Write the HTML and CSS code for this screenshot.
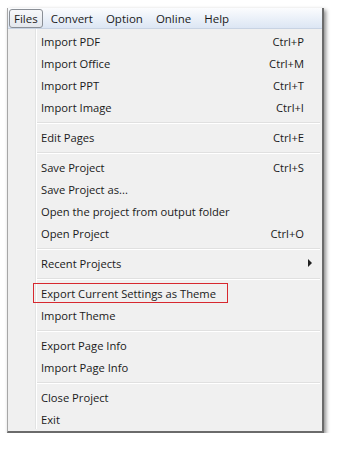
FILE: index.html
```html
<!DOCTYPE html>
<html lang="en">
<head>
    <meta charset="UTF-8">
    <title>Files Menu</title>
    <link rel="stylesheet" href="styles.css">
</head>
<body>
    <div class="window">
        <!-- Top menu bar -->
        <div class="menu-bar">
            <span class="bar-item active">Files</span>
            <span class="bar-item">Convert</span>
            <span class="bar-item">Option</span>
            <span class="bar-item">Online</span>
            <span class="bar-item">Help</span>
        </div>

        <!-- Drop-down list -->
        <div class="menu">
            <div class="item"><span>Import PDF</span><span class="key">Ctrl+P</span></div>
            <div class="item"><span>Import Office</span><span class="key">Ctrl+M</span></div>
            <div class="item"><span>Import PPT</span><span class="key">Ctrl+T</span></div>
            <div class="item"><span>Import Image</span><span class="key">Ctrl+I</span></div>
            <div class="sep"></div>
            <div class="item"><span>Edit Pages</span><span class="key">Ctrl+E</span></div>
            <div class="sep"></div>
            <div class="item"><span>Save Project</span><span class="key">Ctrl+S</span></div>
            <div class="item"><span>Save Project as...</span></div>
            <div class="item"><span>Open the project from output folder</span></div>
            <div class="item"><span>Open Project</span><span class="key">Ctrl+O</span></div>
            <div class="sep"></div>
            <div class="item"><span>Recent Projects</span><span class="arrow"></span></div>
            <div class="sep"></div>
            <div class="item marked"><span>Export Current Settings as Theme</span></div>
            <div class="item"><span>Import Theme</span></div>
            <div class="sep"></div>
            <div class="item"><span>Export Page Info</span></div>
            <div class="item"><span>Import Page Info</span></div>
            <div class="sep"></div>
            <div class="item"><span>Close Project</span></div>
            <div class="item"><span>Exit</span></div>
        </div>
    </div>
</body>
</html>
```

FILE: styles.css
```css
body {
    margin: 0;
    background-color: #ffffff;
    font-family: "Open Sans", "Noto Sans", sans-serif;
    font-size: 11.2px;
    color: #1a1a1a;
}

/* Outer frame with a soft drop shadow */
.window {
    margin: 8px 0 0 7px;
    width: 314px;
    border-left: 1px solid #a7a7a7;
    border-right: 2px solid #6b6b6b;
    border-bottom: 2px solid #6b6b6b;
    box-shadow: 2px 2px 4px rgba(0, 0, 0, 0.45);
    background-color: #f0f0f0;
}

/* Menu bar */
.menu-bar {
    display: flex;
    height: 19px;
    padding: 1px 0 0 1px;
    background: linear-gradient(#fbfcfe, #dce6f4);
    border-bottom: 1px solid #c8d3e3;
    font-size: 11.5px;
}

.bar-item {
    display: flex;
    align-items: center;
    padding: 0 4px;
    height: 17px;
    margin-right: 3px;
    border: 1px solid transparent;
    border-radius: 3px;
}

.bar-item.active {
    border-color: #8a8f96;
    background: linear-gradient(#f7f8fa, #e3e7ed);
}

/* Drop-down list */
.menu {
    padding: 2px 0 0 0;
    background: linear-gradient(to right, #f0f0f0 27px, #e2e3e3 27px, #e2e3e3 28px, #ffffff 28px, #ffffff 29px, #f0f0f0 29px);
}

.item {
    display: flex;
    align-items: center;
    justify-content: space-between;
    height: 18px;
    margin: 0 10px 2px 25px;
    padding: 0 7px;
    border: 1px solid transparent;
    white-space: nowrap;
}

.item.marked {
    border-color: #d7282f;
    margin-right: 94px;
}

.arrow {
    width: 0;
    height: 0;
    margin-right: -8px;
    border-left: 4px solid #202020;
    border-top: 4px solid transparent;
    border-bottom: 4px solid transparent;
}

/* top margin collapses with the item's 2px gap */
.sep {
    height: 1px;
    margin: 5px 2px 3px 29px;
    background-color: #e0e0e0;
    border-bottom: 1px solid #ffffff;
}
```
